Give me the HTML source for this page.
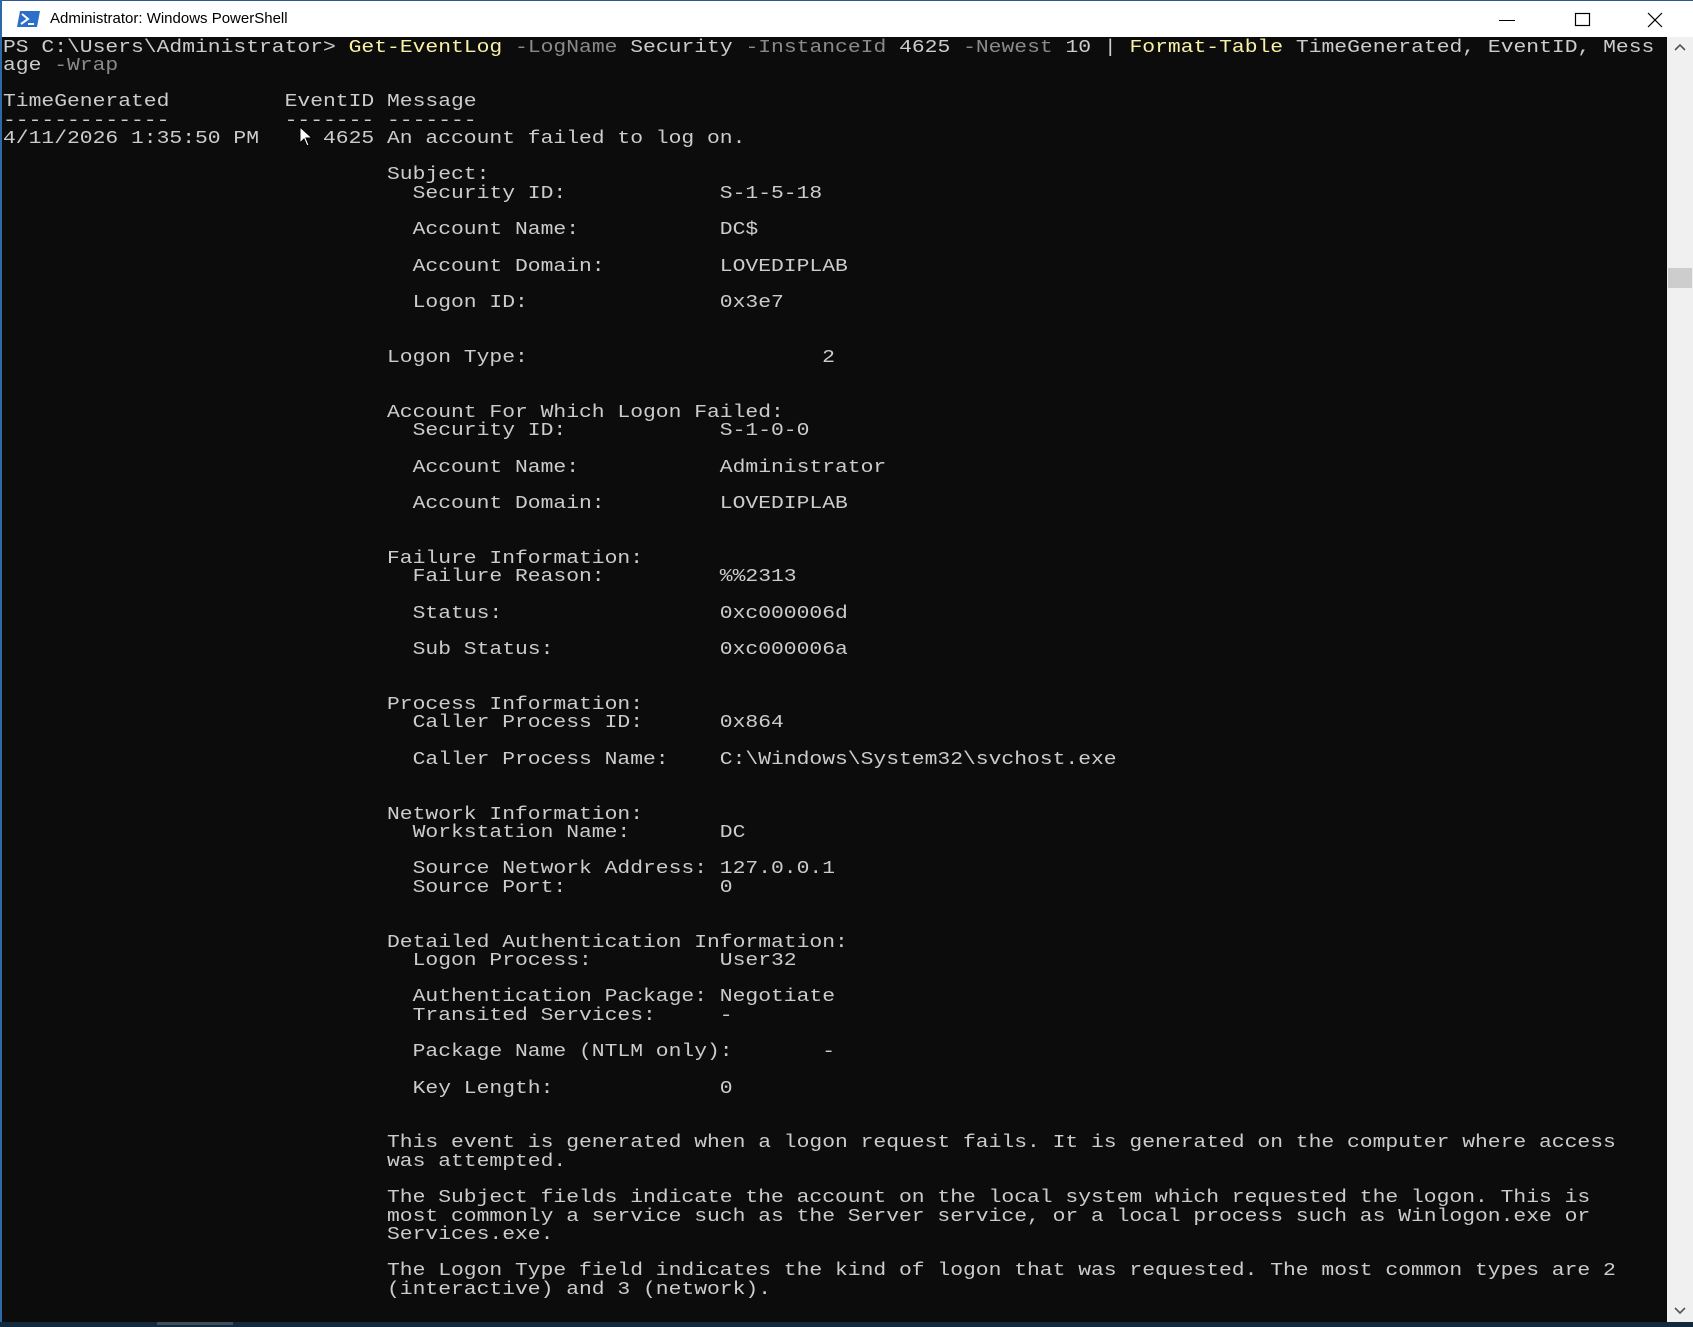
<!DOCTYPE html>
<html><head><meta charset="utf-8"><style>
html,body{margin:0;padding:0;width:1693px;height:1327px;overflow:hidden;background:#0c0c0c;}
#tb{position:absolute;left:0;top:0;width:1693px;height:37px;background:#fff;border-top:1px solid #2b5797;box-sizing:border-box;}
#tb .t{position:absolute;left:50px;top:9px;font:15px "Liberation Sans",sans-serif;color:#000;}
#lb{position:absolute;left:0;top:0;width:2px;height:1327px;background:#2a6aa8;}
#term{position:absolute;left:3px;top:38.5px;transform:scaleX(1.185);transform-origin:0 0;font-family:"Liberation Mono",monospace;font-size:18px;color:#cccccc;white-space:normal;}
#term div{height:18.27px;line-height:18.27px;white-space:pre;overflow:visible;}
.i30{padding-left:30ch}.i32{padding-left:32ch}
.l{display:inline-block;width:24ch}
.y{color:#f9f1a5}.g{color:#8a8a8a}
#sb{position:absolute;left:1667px;top:37px;width:26px;height:1285px;background:#f0f0f0;}
#th{position:absolute;left:1668px;top:268px;width:24px;height:20px;background:#cdcdcd;}
#bb{position:absolute;left:0;top:1322px;width:1693px;height:5px;background:#13293d;}
#bs{position:absolute;left:157px;top:1322px;width:76px;height:3px;background:#3d4f5f;}
</style></head><body>
<div id="term"><div>PS C:\Users\Administrator&gt; <span class="y">Get-EventLog</span> <span class="g">-LogName</span> Security <span class="g">-InstanceId</span> 4625 <span class="g">-Newest</span> 10 | <span class="y">Format-Table</span> TimeGenerated, EventID, Mess</div><div>age <span class="g">-Wrap</span></div><div></div><div>TimeGenerated         EventID Message</div><div>-------------         ------- -------</div><div>4/11/2026 1:35:50 PM     4625 An account failed to log on.</div><div></div><div class="i30">Subject:</div><div class="i32"><span class="l">Security ID:</span>S-1-5-18</div><div></div><div class="i32"><span class="l">Account Name:</span>DC$</div><div></div><div class="i32"><span class="l">Account Domain:</span>LOVEDIPLAB</div><div></div><div class="i32"><span class="l">Logon ID:</span>0x3e7</div><div></div><div></div><div class="i30"><span style="display:inline-block;width:34ch">Logon Type:</span>2</div><div></div><div></div><div class="i30">Account For Which Logon Failed:</div><div class="i32"><span class="l">Security ID:</span>S-1-0-0</div><div></div><div class="i32"><span class="l">Account Name:</span>Administrator</div><div></div><div class="i32"><span class="l">Account Domain:</span>LOVEDIPLAB</div><div></div><div></div><div class="i30">Failure Information:</div><div class="i32"><span class="l">Failure Reason:</span>%%2313</div><div></div><div class="i32"><span class="l">Status:</span>0xc000006d</div><div></div><div class="i32"><span class="l">Sub Status:</span>0xc000006a</div><div></div><div></div><div class="i30">Process Information:</div><div class="i32"><span class="l">Caller Process ID:</span>0x864</div><div></div><div class="i32"><span class="l">Caller Process Name:</span>C:\Windows\System32\svchost.exe</div><div></div><div></div><div class="i30">Network Information:</div><div class="i32"><span class="l">Workstation Name:</span>DC</div><div></div><div class="i32"><span class="l">Source Network Address:</span>127.0.0.1</div><div class="i32"><span class="l">Source Port:</span>0</div><div></div><div></div><div class="i30">Detailed Authentication Information:</div><div class="i32"><span class="l">Logon Process:</span>User32</div><div></div><div class="i32"><span class="l">Authentication Package:</span>Negotiate</div><div class="i32"><span class="l">Transited Services:</span>-</div><div></div><div class="i32"><span style="display:inline-block;width:32ch">Package Name (NTLM only):</span>-</div><div></div><div class="i32"><span class="l">Key Length:</span>0</div><div></div><div></div><div class="i30">This event is generated when a logon request fails. It is generated on the computer where access</div><div class="i30">was attempted.</div><div></div><div class="i30">The Subject fields indicate the account on the local system which requested the logon. This is</div><div class="i30">most commonly a service such as the Server service, or a local process such as Winlogon.exe or</div><div class="i30">Services.exe.</div><div></div><div class="i30">The Logon Type field indicates the kind of logon that was requested. The most common types are 2</div><div class="i30">(interactive) and 3 (network).</div></div>
<svg style="position:absolute;left:299px;top:126px" width="16" height="22" viewBox="0 0 16 22"><path d="M1 1 L1 17 L5 13 L8 20 L10 19 L7 12 L13 12 Z" fill="#fff" stroke="#000" stroke-width="1"/></svg>
<div id="tb">
<svg style="position:absolute;left:17px;top:10px" width="23" height="16" viewBox="0 0 23 16"><path d="M3 0 H23 L20 16 H0 Z" fill="#2a6fc9"/><path d="M5 3 L11 8 L4 13" stroke="#fff" stroke-width="2" fill="none"/><path d="M11 13 H17" stroke="#fff" stroke-width="2"/></svg>
<span class="t">Administrator: Windows PowerShell</span>
<svg style="position:absolute;left:1498px;top:12px" width="18" height="14"><path d="M1 7.5 H17" stroke="#000" stroke-width="1"/></svg>
<svg style="position:absolute;left:1574px;top:11px" width="18" height="16"><rect x="1.5" y="1.5" width="14" height="12" fill="none" stroke="#000" stroke-width="1.2"/></svg>
<svg style="position:absolute;left:1646px;top:10px" width="18" height="18"><path d="M2 2 L16 16 M16 2 L2 16" stroke="#000" stroke-width="1.2"/></svg>
</div>
<div id="lb"></div>
<div id="sb">
<svg style="position:absolute;left:7px;top:7px" width="12" height="8"><path d="M1 6 L6 1 L11 6" stroke="#555" stroke-width="1.6" fill="none"/></svg>
<svg style="position:absolute;left:7px;top:1270px" width="12" height="8"><path d="M1 1 L6 6 L11 1" stroke="#555" stroke-width="1.6" fill="none"/></svg>
</div>
<div id="th"></div>
<div id="bb"></div>
<div id="bs"></div>
</body></html>
